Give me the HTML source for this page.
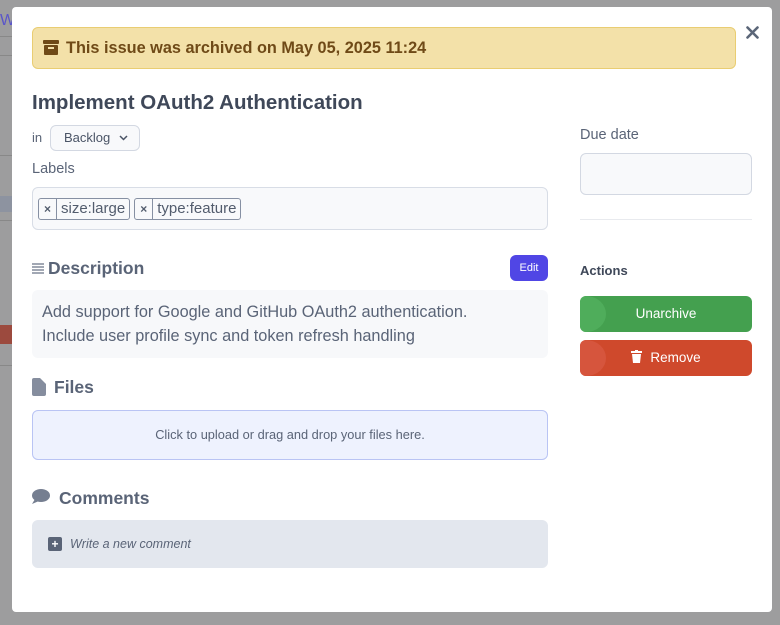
<!DOCTYPE html>
<html><head><meta charset="utf-8"><style>
*{box-sizing:border-box;margin:0;padding:0}
body{width:780px;height:625px;overflow:hidden;background:#9d9d9e;font-family:"Liberation Sans",sans-serif;position:relative}
.bg{position:absolute;left:0;width:12px}
.mw{position:absolute;left:12px;top:7px;width:760px;height:605px;background:#fff;border-radius:4px}
.m{position:absolute;left:12px;top:0;width:760px;height:612px}
.ab{position:absolute;left:20px;top:27px;width:704px;height:42px;background:#f3e1a9;border:1px solid #e9cd72;border-radius:6px;color:#6f4a17;font-weight:bold;font-size:16.3px;line-height:40px;padding-left:33px}
h1{position:absolute;left:20px;top:91px;font-size:20.5px;color:#3f4859;font-weight:bold}
.t{position:absolute;color:#5a6477}
.box{position:absolute;border-radius:6px}
.tag{display:inline-block;border:1px solid #8690a3;border-radius:3px;height:22px;font-size:15px;line-height:20px;color:#525c6d;margin-right:4px;vertical-align:top}
.tag b{display:inline-block;border-right:1px solid #8690a3;width:18px;text-align:center;font-size:12px}
.tag span{padding:0 4px}
</style></head><body>
<div class="bg" style="top:12px;color:#5a55c9;font-size:16px">W</div>
<div class="bg" style="top:36px;height:1px;background:#888"></div>
<div class="bg" style="top:55px;height:1px;background:#888"></div>
<div class="bg" style="top:155px;height:1px;background:#888"></div>
<div class="bg" style="top:196px;height:16px;background:#8d93a0"></div>
<div class="bg" style="top:220px;height:1px;background:#888"></div>
<div class="bg" style="top:325px;height:19px;background:#9c4a3e"></div>
<div class="bg" style="top:365px;height:1px;background:#888"></div>
<div class="mw"></div>
<div class="m">
<div class="ab"><svg style="position:absolute;left:10px;top:12px" width="16" height="15" viewBox="0 0 16 15"><rect x="0" y="0" width="16" height="4" rx="1" fill="#6f4a17"/><rect x="1" y="5" width="14" height="10" rx="1" fill="#6f4a17"/><rect x="5" y="7" width="6" height="2" fill="#f3e1a9"/></svg>This issue was archived on May 05, 2025 11:24</div>
<svg style="position:absolute;left:734px;top:26px" width="13" height="13" viewBox="0 0 13 13"><path d="M1.5 1.5L11.5 11.5M11.5 1.5L1.5 11.5" stroke="#5b6678" stroke-width="2.6" stroke-linecap="round"/></svg>
<h1>Implement OAuth2 Authentication</h1>
<div class="t" style="left:20px;top:130px;font-size:13px">in</div>
<div class="box" style="left:38px;top:125px;width:90px;height:26px;border:1px solid #d3d8e2;background:#f8f9fb;font-size:13px;color:#4a5466;line-height:24px;padding-left:13px">Backlog <svg width="9" height="6" viewBox="0 0 9 6" style="margin-left:5px;vertical-align:1px"><path d="M1 1L4.5 4.5L8 1" stroke="#4a5466" stroke-width="1.5" fill="none"/></svg></div>
<div class="t" style="left:20px;top:161px;font-size:14.5px">Labels</div>
<div class="box" style="left:20px;top:187px;width:516px;height:43px;border:1px solid #d8dde6;background:#f8f9fb;padding:10px 0 0 5px"><div class="tag"><b>×</b><span>size:large</span></div><div class="tag"><b>×</b><span>type:feature</span></div></div>
<svg style="position:absolute;left:20px;top:263px" width="12" height="11" viewBox="0 0 12 11"><path d="M0 1H12M0 4H12M0 7H12M0 10H12" stroke="#6b7486" stroke-width="1.3"/></svg>
<div class="t" style="left:36px;top:258px;font-size:17.5px;font-weight:bold;color:#5a6477">Description</div>
<div class="box" style="left:498px;top:255px;width:38px;height:26px;background:#5046e5;color:#fff;font-size:11px;line-height:26px;text-align:center">Edit</div>
<div class="box" style="left:20px;top:290px;width:516px;height:68px;background:#f7f8fa;padding:10px 10px;font-size:16.3px;color:#5a6477;line-height:24px">Add support for Google and GitHub OAuth2 authentication.<br>Include user profile sync and token refresh handling</div>
<svg style="position:absolute;left:20px;top:378px" width="14" height="18" viewBox="0 0 14 18"><path d="M2 0H8L14 6V16a2 2 0 0 1-2 2H2a2 2 0 0 1-2-2V2a2 2 0 0 1 2-2z" fill="#858d9e"/></svg>
<div class="t" style="left:42px;top:377px;font-size:17.5px;font-weight:bold">Files</div>
<div class="box" style="left:20px;top:410px;width:516px;height:50px;background:#eef2fe;border:1px solid #b9c4f4;text-align:center;font-size:12.8px;line-height:48px;color:#5a6477">Click to upload or drag and drop your files here.</div>
<svg style="position:absolute;left:20px;top:489px" width="18" height="15" viewBox="0 0 18 15"><ellipse cx="9" cy="6.5" rx="9" ry="6.5" fill="#757e90"/><path d="M3 10L0 15L7 12z" fill="#757e90"/></svg>
<div class="t" style="left:47px;top:488px;font-size:17.5px;font-weight:bold">Comments</div>
<div class="box" style="left:20px;top:520px;width:516px;height:48px;background:#e3e7ee;font-size:12.5px;color:#5a6477;font-style:italic;line-height:48px;padding-left:38px"><span style="position:absolute;left:16px;top:17px;width:14px;height:14px;background:#5a6477;border-radius:2px;color:#fff;font-style:normal;font-weight:bold;font-size:12px;line-height:14px;text-align:center">+</span>Write a new comment</div>
<div class="t" style="left:568px;top:127px;font-size:14.5px">Due date</div>
<div class="box" style="left:568px;top:153px;width:172px;height:42px;border:1px solid #d3d8e2;background:#f8f9fb"></div>
<div style="position:absolute;left:568px;top:219px;width:172px;height:1px;background:#e8eaee"></div>
<div class="t" style="left:568px;top:263px;font-size:13px;font-weight:bold;color:#3f4859">Actions</div>
<div class="box" style="left:568px;top:296px;width:172px;height:36px;background:#44a04f;color:#fff;font-size:13.5px;line-height:36px;text-align:center;overflow:hidden"><span style="position:absolute;left:-14px;top:0;width:40px;height:36px;border-radius:50%;background:#4fad5b"></span><span style="position:relative">Unarchive</span></div>
<div class="box" style="left:568px;top:340px;width:172px;height:36px;background:#cf492c;color:#fff;font-size:13.5px;line-height:36px;text-align:center;overflow:hidden"><span style="position:absolute;left:-14px;top:0;width:40px;height:36px;border-radius:50%;background:#d6553d"></span><span style="position:relative"><svg width="11" height="13" viewBox="0 0 11 13" style="vertical-align:-1px;margin-right:8px"><rect x="0" y="1" width="11" height="2" fill="#fff"/><rect x="4" y="0" width="3" height="2" fill="#fff"/><path d="M1 4H10L9 13H2z" fill="#fff"/></svg>Remove</span></div>
</div>
</body></html>
